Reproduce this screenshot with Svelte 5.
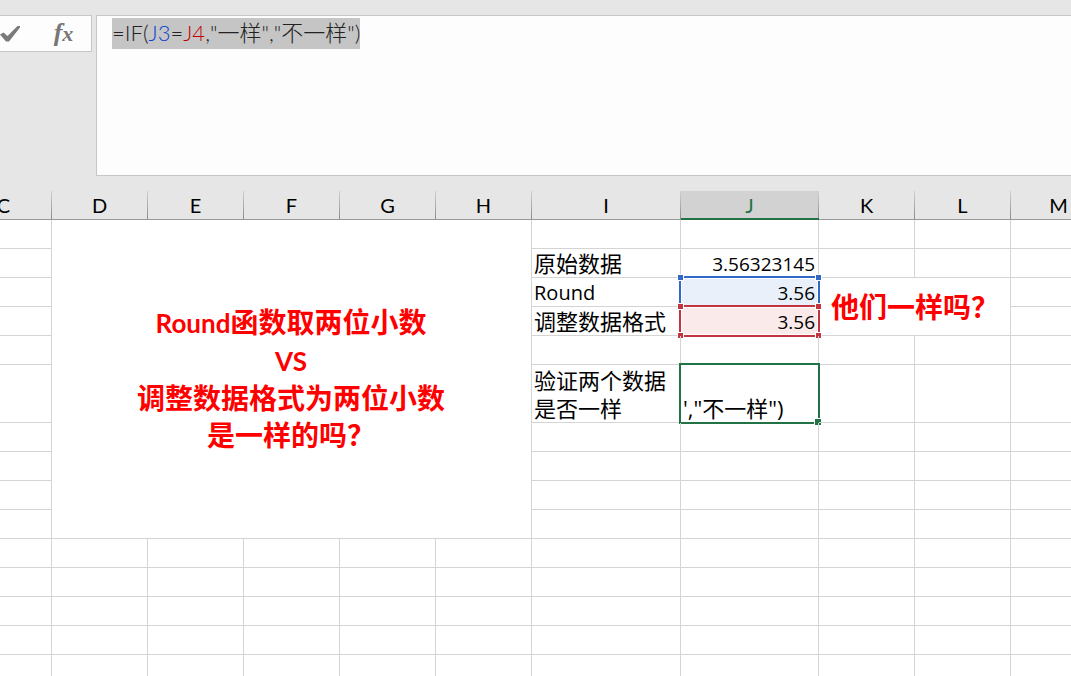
<script>
    const headers = ["C", "D", "E", "F", "G", "H", "I", "J", "K", "L", "M"];
    const widths = { I: 149, J: 138 };

    // cells that are covered by a merged block and must not be rendered
    const merged = (row, col) =>
        (row <= 10 && "EFGH".includes(col)) ||
        (row > 1 && row <= 10 && col == "D") ||
        (row == 3 && col == "L") ||
        (row == 4 && "KL".includes(col));

    const rows = Array.from({ length: 15 }, (_, i) => i + 1);

    const labels = {
        I2: "原始数据",
        I3: "Round",
        I4: "调整数据格式",
        I6: "验证两个数据是否一样",
    };

    const numbers = { J2: "3.56323145", J3: "3.56", J4: "3.56" };

    let editing = $state("',\"不一样\")");
</script>

<main class="app">
    <div class="formula-bar">
        <div class="tools">
            <button class="tool" aria-label="输入">
                <svg width="20" height="18" viewBox="0 0 20 18">
                    <path d="M0 9.500 L3.500 7.500 L7.500 11 L17.500 1 L20 1 L20 2.500 L9 16.500 L6 16.500 Z" fill="#7a7a7a" />
                </svg>
            </button>
            <button class="tool fx" aria-label="插入函数"><i>f</i><i class="x">x</i></button>
        </div>
        <div class="formula" role="textbox" aria-label="编辑栏" tabindex="0" contenteditable="true" spellcheck="false"><span class="marked">=IF(<span class="ref-blue">J3</span>=<span class="ref-red">J4</span>,"一样","不一样")</span></div>
    </div>

    <div class="sheet">
        <table>
            <colgroup>
                {#each headers as h}
                    <col style:width="{widths[h] ?? 96}px" />
                {/each}
            </colgroup>
            <thead>
                <tr>
                    {#each headers as h}
                        <th scope="col" class:active={h == "J"}>{h}</th>
                    {/each}
                </tr>
            </thead>
            <tbody>
                {#each rows as row}
                    <tr class:tall={row == 6}>
                        {#each headers as col}
                            {@const id = col + row}
                            {#if id == "D1"}
                                <td class="title" colspan="5" rowspan="10">
                                    <span class="latin">Round</span>函数取两位小数<br />
                                    <span class="latin">VS</span><br />
                                    调整数据格式为两位小数<br />是一样的吗？
                                </td>
                            {:else if id == "K3"}
                                <td class="question" colspan="2" rowspan="2">他们一样吗？</td>
                            {:else if id == "J6"}
                                <td class="editor">
                                    <input aria-label="J6" bind:value={editing} spellcheck="false" />
                                    <div class="frame"></div>
                                </td>
                            {:else if numbers[id]}
                                <td class="number" class:blue={row == 3} class:red={row == 4}>
                                    {numbers[id]}
                                    {#if row > 2}
                                        <div class="range">
                                            <b class="handle"></b><b class="handle right"></b>
                                            <b class="handle bottom"></b><b class="handle right bottom"></b>
                                        </div>
                                    {/if}
                                </td>
                            {:else if !merged(row, col)}
                                <td class:wrap={row == 6} class:text={id == "I3"}>{labels[id] ?? ""}</td>
                            {/if}
                        {/each}
                    </tr>
                {/each}
            </tbody>
        </table>
    </div>
</main>

<style>
    :global(body)
    {
        margin: 0;
        background: #fff;
    }

    .app
    {
        height: 100vh;
        overflow: hidden;
        background: #e6e6e6;
        font-family: "Open Sans", "Noto Sans CJK SC", sans-serif;
        color: #000;
    }

    .formula-bar
    {
        display: flex;
        align-items: flex-start;
        gap: 4px;
        padding: 15px 0;
    }

    .tools
    {
        display: flex;
        box-sizing: border-box;
        width: 92px;
        height: 37px;
        border: 1px solid #c6c6c6;
        border-left: 0;
        background: #fdfdfd;
    }

    .tool
    {
        display: flex;
        align-items: center;
        width: 36px;
        padding: 0;
        border: 0;
        background: none;
        color: #777;
    }

    .fx
    {
        align-items: baseline;
        justify-content: center;
        width: 55px;
        padding-top: 2px;
        font: bold 26px "Liberation Serif", serif;
    }

    .x
    {
        font-size: 22px;
    }

    .formula
    {
        flex: 1;
        box-sizing: border-box;
        height: 161px;
        padding: 2px 15px;
        border: 1px solid #c6c6c6;
        border-right: 0;
        background: #fdfdfd;
        outline: 0;
        font-family: "Lato", "Noto Sans CJK SC", sans-serif;
        font-size: 22px;
        font-weight: 300;
        font-kerning: none;
        line-height: 30px;
        color: #222;
    }

    .marked
    {
        display: inline-block;
        padding-bottom: 1px;
        background: #c5c5c5;
    }

    .ref-blue
    {
        color: #0a45d0;
    }

    .ref-red
    {
        color: #c00000;
    }

    .sheet
    {
        overflow: hidden;
        background: #fff;
    }

    table
    {
        width: 1151px;
        margin-left: -44px;
        table-layout: fixed;
        border-collapse: separate;
        border-spacing: 0;
    }

    th
    {
        box-sizing: border-box;
        height: 29px;
        padding: 2px 1px 0 0;
        border-bottom: 1px solid #999;
        background: linear-gradient(#d0d0d0, #8c8c8c) right / 1px 100% no-repeat #e6e6e6;
        font-family: "Lato", sans-serif;
        font-size: 20px;
        font-weight: 400;
        line-height: 25px;
        vertical-align: top;
    }

    th.active
    {
        border-bottom: 2px solid #217346;
        background-color: #d2d2d2;
        color: #217346;
    }

    td
    {
        position: relative;
        box-sizing: border-box;
        height: 29px;
        padding: 0 3px 0 2px;
        border-right: 1px solid #d4d4d4;
        border-bottom: 1px solid #d4d4d4;
        font-size: 22px;
        line-height: 28px;
        white-space: nowrap;
    }

    .tall td
    {
        height: 58px;
    }

    td.wrap
    {
        white-space: normal;
    }

    .text,
    .number
    {
        padding-top: 2px;
        line-height: 26px;
    }

    .text
    {
        font-size: 20px;
    }

    .number
    {
        text-align: right;
        font-size: 19px;
    }

    .title,
    .question
    {
        font-size: 28px;
        font-weight: 700;
        line-height: 37px;
        color: #f00;
    }

    .title
    {
        text-align: center;
    }

    .latin
    {
        font-family: "Lato", sans-serif;
        font-size: 26px;
        font-weight: 900;
    }

    .title .latin
    {
        font-weight: 700;
    }

    .question
    {
        padding-left: 12px;
        line-height: 28px;
    }

    .blue
    {
        --line: #3069c9;
        background: #e9f0fa;
    }

    .red
    {
        --line: #c2343f;
        background: #faeaea;
    }

    .range,
    .frame
    {
        position: absolute;
        inset: -2px;
        border: 2px solid var(--line);
        pointer-events: none;
    }

    .range
    {
        box-shadow: inset 0 0 0 1px #fff;
    }

    .handle
    {
        position: absolute;
        top: -4px;
        left: -4px;
        width: 5px;
        height: 5px;
        border: 1px solid #fff;
        background: var(--line);
    }

    .handle.right
    {
        left: auto;
        right: -4px;
    }

    .handle.bottom
    {
        top: auto;
        bottom: -4px;
    }

    .editor
    {
        --line: #217346;
        vertical-align: bottom;
    }

    .editor input
    {
        display: block;
        box-sizing: border-box;
        width: 100%;
        height: 28px;
        padding: 0;
        border: 0;
        outline: 0;
        background: none;
        font: inherit;
        color: inherit;
    }

    .frame::after
    {
        content: "";
        position: absolute;
        right: -3px;
        bottom: -3px;
        width: 6px;
        height: 6px;
        border: solid #fff;
        border-width: 1px 0 0 1px;
        background: var(--line);
    }
</style>
